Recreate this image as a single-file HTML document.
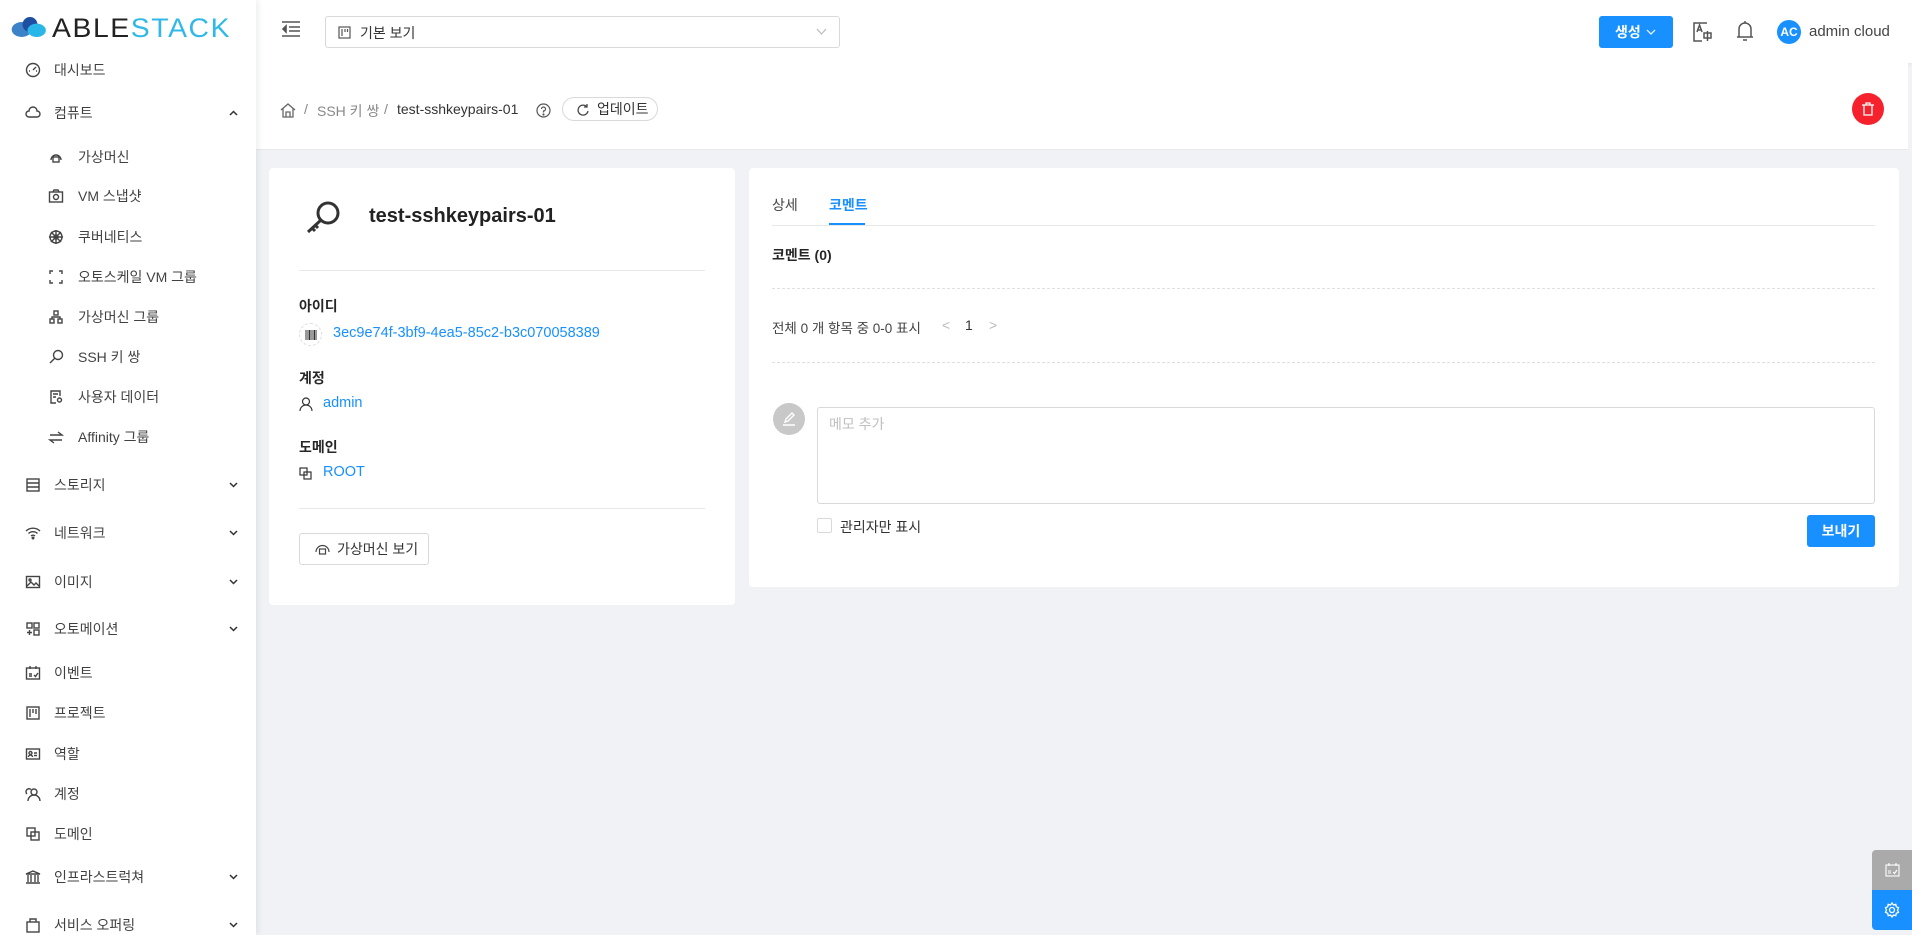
<!DOCTYPE html>
<html><head><meta charset="utf-8"><style>
*{box-sizing:border-box;margin:0;padding:0}
body{width:1912px;height:935px;overflow:hidden;background:#f0f2f5;font-family:"Liberation Sans","Noto Sans CJK KR",sans-serif;font-size:14px;color:rgba(0,0,0,.85);position:relative}
.a{position:absolute}
#side{left:0;top:0;width:256px;height:935px;background:#fff;box-shadow:2px 0 6px rgba(0,21,41,.08);z-index:2}
.it{position:absolute;left:0;width:256px;height:20px;line-height:20px;font-size:14px;color:rgba(0,0,0,.75)}
.it svg{position:absolute;top:2px;width:16px;height:16px;fill:none;stroke:#444;stroke-width:1.4}
.it .t{position:absolute}
.it .chev{left:229px;top:6px;width:9px;height:8px}
#hdr{left:256px;top:0;width:1656px;height:63px;background:#fff;box-shadow:0 1px 4px rgba(0,21,41,.08)}
.blue{color:#1890ff}
.lbl{font-weight:bold;font-size:14px;color:rgba(0,0,0,.85)}
.card{background:#fff;border-radius:4px}
</style></head><body>
<div id="side" class="a">
 <div class="a" style="left:10px;top:12px;width:240px;height:30px">
  <svg class="a" style="left:0;top:3px" width="40" height="24" viewBox="0 0 48 26"><ellipse cx="14" cy="16" rx="12" ry="9" fill="#3b82c8"/><circle cx="24" cy="10" r="9" fill="#1f4fa3"/><ellipse cx="32" cy="17" rx="11" ry="8" fill="#29b6e8"/></svg>
  <div class="a" style="left:42px;top:1px;font-size:27px;letter-spacing:1.5px;line-height:30px;transform:scaleX(1.05);transform-origin:left"><span style="color:#222">ABLE</span><span style="color:#2fb8e8">STACK</span></div>
 </div>
 <div class="it" style="top:60px"><svg style="left:25px" viewBox="0 0 16 16"><circle cx="8" cy="8" r="6.5"/><path d="M8 8l3-3M4 9h1M11 9h1"/></svg><span class="t" style="left:54px">대시보드</span></div>
 <div class="it" style="top:103px"><svg style="left:25px" viewBox="0 0 16 16"><path d="M4 12h8a3 3 0 0 0 0-6 4 4 0 0 0-8 0 3 3 0 0 0 0 6z"/></svg><span class="t" style="left:54px">컴퓨트</span><svg class="chev" viewBox="0 0 9 8" style="stroke:#333;stroke-width:1.5"><path d="M1 6l3.5-3.5L8 6"/></svg></div>
 <div class="it" style="top:147px"><svg style="left:48px" viewBox="0 0 16 16"><path d="M3 11a5 5 0 1 1 10 0"/><rect x="5" y="8" width="6" height="5"/></svg><span class="t" style="left:78px">가상머신</span></div>
 <div class="it" style="top:186px"><svg style="left:48px" viewBox="0 0 16 16"><rect x="1.5" y="4" width="13" height="10"/><circle cx="8" cy="9" r="2.5"/><path d="M5 4l1-2h4l1 2"/></svg><span class="t" style="left:78px">VM 스냅샷</span></div>
 <div class="it" style="top:227px"><svg style="left:48px" viewBox="0 0 16 16"><circle cx="8" cy="8" r="6"/><circle cx="8" cy="8" r="2"/><path d="M8 1v14M1 8h14M3 3l10 10M13 3L3 13"/></svg><span class="t" style="left:78px">쿠버네티스</span></div>
 <div class="it" style="top:267px"><svg style="left:48px" viewBox="0 0 16 16"><path d="M2 5V2h3M11 2h3v3M14 11v3h-3M5 14H2v-3"/></svg><span class="t" style="left:78px">오토스케일 VM 그룹</span></div>
 <div class="it" style="top:307px"><svg style="left:48px" viewBox="0 0 16 16"><rect x="6" y="2" width="4" height="4"/><rect x="2" y="10" width="4" height="4"/><rect x="10" y="10" width="4" height="4"/><path d="M4 10V8h8v2"/></svg><span class="t" style="left:78px">가상머신 그룹</span></div>
 <div class="it" style="top:347px"><svg style="left:48px" viewBox="0 0 16 16"><circle cx="10" cy="6" r="4.5"/><path d="M7 9l-5 5"/></svg><span class="t" style="left:78px">SSH 키 쌍</span></div>
 <div class="it" style="top:387px"><svg style="left:48px" viewBox="0 0 16 16"><path d="M12 7V2H3v12h5M5 5h5M5 8h3"/><circle cx="11.5" cy="11" r="2"/></svg><span class="t" style="left:78px">사용자 데이터</span></div>
 <div class="it" style="top:427px"><svg style="left:48px" viewBox="0 0 16 16"><path d="M2 6h12L10 3M14 11H2l4 3"/></svg><span class="t" style="left:78px">Affinity 그룹</span></div>
 <div class="it" style="top:475px"><svg style="left:25px" viewBox="0 0 16 16"><rect x="2" y="2" width="12" height="12"/><path d="M2 6h12M2 10h12"/></svg><span class="t" style="left:54px">스토리지</span><svg class="chev" viewBox="0 0 9 8" style="stroke:#333;stroke-width:1.5"><path d="M1 2l3.5 3.5L8 2"/></svg></div>
 <div class="it" style="top:523px"><svg style="left:25px" viewBox="0 0 16 16"><path d="M1 6a10 10 0 0 1 14 0M3.5 8.5a6.5 6.5 0 0 1 9 0M6 11a3 3 0 0 1 4 0"/><circle cx="8" cy="13" r=".8"/></svg><span class="t" style="left:54px">네트워크</span><svg class="chev" viewBox="0 0 9 8" style="stroke:#333;stroke-width:1.5"><path d="M1 2l3.5 3.5L8 2"/></svg></div>
 <div class="it" style="top:572px"><svg style="left:25px" viewBox="0 0 16 16"><rect x="1.5" y="2.5" width="13" height="11"/><path d="M2 12l4-4 3 3 2-2 3 3"/><circle cx="5" cy="6" r="1"/></svg><span class="t" style="left:54px">이미지</span><svg class="chev" viewBox="0 0 9 8" style="stroke:#333;stroke-width:1.5"><path d="M1 2l3.5 3.5L8 2"/></svg></div>
 <div class="it" style="top:619px"><svg style="left:25px" viewBox="0 0 16 16"><rect x="2" y="2" width="5" height="5"/><rect x="9" y="2" width="5" height="5"/><rect x="9" y="9" width="5" height="5"/><path d="M4.5 9v5M2 11.5h5"/></svg><span class="t" style="left:54px">오토메이션</span><svg class="chev" viewBox="0 0 9 8" style="stroke:#333;stroke-width:1.5"><path d="M1 2l3.5 3.5L8 2"/></svg></div>
 <div class="it" style="top:663px"><svg style="left:25px" viewBox="0 0 16 16"><rect x="1.5" y="3" width="13" height="11"/><path d="M5 1v3M11 1v3M4 9h3M4 11h3M9 10l1.5 1.5L13 8"/></svg><span class="t" style="left:54px">이벤트</span></div>
 <div class="it" style="top:703px"><svg style="left:25px" viewBox="0 0 16 16"><rect x="2" y="2" width="12" height="12"/><path d="M5 4v8M8 4v4M11 4v5"/></svg><span class="t" style="left:54px">프로젝트</span></div>
 <div class="it" style="top:744px"><svg style="left:25px" viewBox="0 0 16 16"><rect x="1.5" y="3" width="13" height="10"/><circle cx="5.5" cy="7" r="1.5"/><path d="M3.5 11a2 2 0 0 1 4 0M9 7h3M9 9.5h3"/></svg><span class="t" style="left:54px">역할</span></div>
 <div class="it" style="top:784px"><svg style="left:25px" viewBox="0 0 16 16"><circle cx="9" cy="6" r="3"/><path d="M3 15a6 6 0 0 1 12 0M6 3.5A3 3 0 0 0 2 8"/></svg><span class="t" style="left:54px">계정</span></div>
 <div class="it" style="top:824px"><svg style="left:25px" viewBox="0 0 16 16"><rect x="2" y="2" width="8" height="8"/><rect x="6" y="6" width="8" height="8"/></svg><span class="t" style="left:54px">도메인</span></div>
 <div class="it" style="top:867px"><svg style="left:25px" viewBox="0 0 16 16"><path d="M1 5l7-3 7 3zM3 6v7M6 6v7M10 6v7M13 6v7M1 14h14"/></svg><span class="t" style="left:54px">인프라스트럭쳐</span><svg class="chev" viewBox="0 0 9 8" style="stroke:#333;stroke-width:1.5"><path d="M1 2l3.5 3.5L8 2"/></svg></div>
 <div class="it" style="top:915px"><svg style="left:25px" viewBox="0 0 16 16"><rect x="2" y="5" width="12" height="10"/><path d="M5 5V2h6v3"/></svg><span class="t" style="left:54px">서비스 오퍼링</span><svg class="chev" viewBox="0 0 9 8" style="stroke:#333;stroke-width:1.5"><path d="M1 2l3.5 3.5L8 2"/></svg></div>
</div>

<div id="hdr" class="a">
 <svg class="a" style="left:26px;top:21px" width="18" height="16" viewBox="0 0 18 16" fill="none" stroke="#555" stroke-width="1.6"><path d="M0 1h18M7 6h11M7 10h11M0 15h18"/><path d="M4 5L1 8l3 3z" fill="#555"/></svg>
 <div class="a" style="left:69px;top:16px;width:515px;height:32px;border:1px solid #d9d9d9;border-radius:3px">
  <svg class="a" style="left:12px;top:9px" width="13" height="13" viewBox="0 0 13 13" fill="none" stroke="#555" stroke-width="1.2"><rect x="1" y="1" width="11" height="11"/><path d="M4 3v7M7 3v3M9.5 3v3"/></svg>
  <span class="a" style="left:34px;top:6px;color:#333">기본 보기</span>
  <svg class="a" style="left:490px;top:11px" width="11" height="8" viewBox="0 0 11 8" fill="none" stroke="#bbb" stroke-width="1.2"><path d="M1 1l4.5 5L10 1"/></svg>
 </div>
 <div class="a" style="left:1343px;top:16px;width:74px;height:32px;background:#1890ff;border-radius:3px;color:#fff;line-height:32px;padding-left:16px;font-weight:bold">생성<svg style="position:absolute;left:47px;top:12px" width="10" height="8" viewBox="0 0 10 8" fill="none" stroke="#fff" stroke-width="1.2"><path d="M1 2l4 4 4-4"/></svg></div>
 <svg class="a" style="left:1437px;top:22px" width="20" height="20" viewBox="0 0 20 20" fill="none" stroke="#555" stroke-width="1.5"><path d="M14 1H1v18h8"/><path d="M4 10l2.5-7L9 10M5 8h3"/><rect x="11" y="11" width="7" height="5"/><path d="M14.5 9v10"/></svg>
 <svg class="a" style="left:1480px;top:20px" width="18" height="22" viewBox="0 0 18 22" fill="none" stroke="#555" stroke-width="1.5"><path d="M3 17V9a6 6 0 0 1 12 0v8zM1 17h16M9 1v2M7 20h4"/></svg>
 <div class="a" style="left:1521px;top:20px;width:24px;height:24px;border-radius:50%;background:#1890ff;color:#fff;font-size:12px;font-weight:bold;text-align:center;line-height:24px">AC</div>
 <span class="a" style="left:1553px;top:23px;font-size:15px;color:#444">admin cloud</span>
</div>

<div class="a" style="left:256px;top:63px;width:1652px;height:87px;background:#fff;border-bottom:1px solid #e8e8e8">
 <svg class="a" style="left:24px;top:39px" width="16" height="16" viewBox="0 0 16 16" fill="none" stroke="#666" stroke-width="1.3"><path d="M1 8l7-6 7 6M3 6v9h10V6M6 15v-5h4v5"/></svg>
 <span class="a" style="left:48px;top:38px;color:#888">/</span>
 <span class="a" style="left:61px;top:38px;color:#888">SSH 키 쌍</span>
 <span class="a" style="left:128px;top:38px;color:#888">/</span>
 <span class="a" style="left:141px;top:38px;color:#333">test-sshkeypairs-01</span>
 <svg class="a" style="left:280px;top:40px" width="15" height="15" viewBox="0 0 15 15" fill="none" stroke="#555" stroke-width="1.2"><circle cx="7.5" cy="7.5" r="6.5"/><path d="M5.5 6a2 2 0 1 1 2 2v1.5"/><circle cx="7.5" cy="11.5" r=".5" fill="#555"/></svg>
 <div class="a" style="left:306px;top:34px;width:96px;height:24px;border:1px solid #d9d9d9;border-radius:12px;line-height:22px;padding-left:34px;color:#333">업데이트
  <svg class="a" style="left:13px;top:5px" width="13" height="13" viewBox="0 0 13 13" fill="none" stroke="#444" stroke-width="1.3"><path d="M11 4A5 5 0 1 0 12 8M11 1v3H8"/></svg></div>
 <div class="a" style="left:1596px;top:30px;width:32px;height:32px;border-radius:50%;background:#f5222d">
  <svg class="a" style="left:10px;top:9px" width="12" height="14" viewBox="0 0 12 14" fill="none" stroke="#fff" stroke-width="1.3"><path d="M0 3h12M4 3V1h4v2M2 3v10h8V3"/></svg></div>
</div>

<div class="a card" style="left:269px;top:168px;width:466px;height:437px">
 <svg class="a" style="left:36px;top:32px" width="36" height="34" viewBox="0 0 36 34" fill="none" stroke="#333" stroke-width="3"><circle cx="23" cy="13" r="10"/><path d="M16 20L3 32M7 28l3 3M10 25l3 3"/></svg>
 <div class="a" style="left:100px;top:37px;font-size:20px;font-weight:bold;color:#222">test-sshkeypairs-01</div>
 <div class="a" style="left:30px;top:102px;width:406px;height:1px;background:#e8e8e8"></div>
 <div class="a lbl" style="left:30px;top:128px">아이디</div>
 <div class="a" style="left:30px;top:155px;width:23px;height:23px;border-radius:50%;border:1px dashed #ddd"><svg class="a" style="left:5px;top:6px" width="12" height="10" viewBox="0 0 12 10" stroke="#333" stroke-width="1"><path d="M1 0v10M3 0v10M4.5 0v10M6 0v10M8 0v10M9.5 0v10M11 0v10"/></svg></div>
 <div class="a blue" style="left:64px;top:157px;font-size:14.5px">3ec9e74f-3bf9-4ea5-85c2-b3c070058389</div>
 <div class="a lbl" style="left:30px;top:200px">계정</div>
 <svg class="a" style="left:30px;top:229px" width="14" height="15" viewBox="0 0 14 15" fill="none" stroke="#333" stroke-width="1.2"><circle cx="7" cy="4.5" r="3.5"/><path d="M1 14a6 6 0 0 1 12 0"/></svg>
 <div class="a blue" style="left:54px;top:227px;font-size:14.5px">admin</div>
 <div class="a lbl" style="left:30px;top:269px">도메인</div>
 <svg class="a" style="left:30px;top:299px" width="13" height="13" viewBox="0 0 13 13" fill="none" stroke="#333" stroke-width="1.2"><rect x="1" y="1" width="7" height="7"/><rect x="5" y="5" width="7" height="7"/></svg>
 <div class="a blue" style="left:54px;top:296px;font-size:14.5px">ROOT</div>
 <div class="a" style="left:30px;top:340px;width:406px;height:1px;background:#e8e8e8"></div>
 <div class="a" style="left:30px;top:365px;width:130px;height:32px;border:1px solid #d9d9d9;border-radius:3px;line-height:30px;padding-left:37px;color:#333">가상머신 보기
  <svg class="a" style="left:15px;top:8px" width="15" height="14" viewBox="0 0 15 14" fill="none" stroke="#444" stroke-width="1.2"><path d="M1 10a6.5 6.5 0 1 1 13 0"/><rect x="4.5" y="7" width="6" height="5"/></svg></div>
</div>

<div class="a card" style="left:749px;top:168px;width:1150px;height:419px">
 <div class="a" style="left:23px;top:27px;color:#444">상세</div>
 <div class="a" style="left:80px;top:27px;color:#1890ff;font-weight:bold">코멘트</div>
 <div class="a" style="left:23px;top:57px;width:1103px;height:1px;background:#e8e8e8"></div>
 <div class="a" style="left:80px;top:55px;width:36px;height:2px;background:#1890ff"></div>
 <div class="a lbl" style="left:23px;top:77px">코멘트 (0)</div>
 <div class="a" style="left:23px;top:120px;width:1103px;border-top:1px dashed #e0e0e0"></div>
 <div class="a" style="left:23px;top:149px;color:#444;font-size:13.5px">전체 0 개 항목 중 0-0 표시</div>
 <div class="a" style="left:193px;top:149px;color:#bbb">&lt;</div>
 <div class="a" style="left:216px;top:149px;color:#333">1</div>
 <div class="a" style="left:240px;top:149px;color:#bbb">&gt;</div>
 <div class="a" style="left:23px;top:194px;width:1103px;border-top:1px dashed #e0e0e0"></div>
 <div class="a" style="left:24px;top:235px;width:32px;height:32px;border-radius:50%;background:#c8c8c8">
  <svg class="a" style="left:8px;top:8px" width="16" height="16" viewBox="0 0 16 16" fill="none" stroke="#fff" stroke-width="1.4"><path d="M4 11l1-3 6-6 2 2-6 6zM2 14h12"/></svg></div>
 <div class="a" style="left:68px;top:239px;width:1058px;height:97px;border:1px solid #d9d9d9;border-radius:3px"><span class="a" style="left:11px;top:6px;color:#bfbfbf">메모 추가</span></div>
 <div class="a" style="left:68px;top:350px;width:15px;height:15px;border:1px solid #d9d9d9;border-radius:2px"></div>
 <div class="a" style="left:91px;top:349px;color:#333">관리자만 표시</div>
 <div class="a" style="left:1058px;top:347px;width:68px;height:32px;background:#1890ff;border-radius:3px;color:#fff;text-align:center;line-height:32px;font-weight:bold">보내기</div>
</div>

<div class="a" style="left:1872px;top:850px;width:40px;height:40px;background:#aaa;border-radius:4px 0 0 0">
 <svg class="a" style="left:13px;top:13px" width="15" height="14" viewBox="0 0 15 14" fill="none" stroke="#fff" stroke-width="1.1"><rect x="1" y="2" width="13" height="11"/><path d="M4 0v3M11 0v3M3 8h3M3 10h3M8 9l1.5 1.5L12 7"/></svg></div>
<div class="a" style="left:1872px;top:890px;width:40px;height:40px;background:#1890ff;border-radius:0 0 0 4px">
 <svg class="a" style="left:12px;top:12px" width="16" height="16" viewBox="0 0 16 16" fill="none" stroke="#fff" stroke-width="1.3"><circle cx="8" cy="8" r="2.5"/><path d="M8 1l1.5 2 2.3-.7.5 2.4 2.2 1L13.5 8l1 2.3-2.2 1-.5 2.4-2.3-.7L8 15l-1.5-2-2.3.7-.5-2.4-2.2-1L2.5 8 1.5 5.7l2.2-1 .5-2.4 2.3.7z"/></svg></div>
</body></html>
